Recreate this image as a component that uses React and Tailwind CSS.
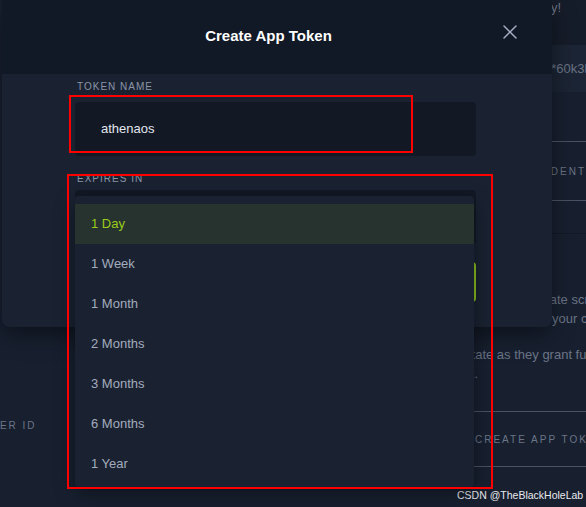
import React from 'react';
import { X } from 'lucide-react';

const options = ['1 Day', '1 Week', '1 Month', '2 Months', '3 Months', '6 Months', '1 Year'];

// Page behind the dialog, mostly covered
const BackgroundPage = () => (
    <div className="flex h-full">
        <div className="w-[300px] shrink-0 pt-[419px]">
            <div className="-ml-[18px] text-[10px] leading-[14px] tracking-[0.2em] text-[#6b7587] whitespace-nowrap">USER ID</div>
        </div>
        <div className="flex-1 min-w-0 flex flex-col text-[#6b7587]">
            <div className="h-[45px] bg-[#161d2a]">
                <div className="w-[261px] text-right text-[13px] leading-4 whitespace-nowrap">Copy it now and enjoy!</div>
            </div>
            <div className="h-[47px] bg-[#1c2535] flex items-center pl-[226px] text-[13px] whitespace-nowrap">******60k3lz7Qa</div>
            <div className="h-[49px]" />
            <div className="h-[60px] border-y border-[#4a5365] flex items-center pl-[246px] text-[10px] tracking-[0.2em] whitespace-nowrap">IDENTITY</div>
            <div className="h-[33px] border-b border-[#131a26]" />
            <div className="mt-[56px] text-[13px] leading-[19px] whitespace-nowrap">
                <div className="pl-[197px]">authenticate scripts and tools</div>
                <div className="pl-[252px]">your code</div>
            </div>
            <div className="mt-[17px] text-[13px] leading-[19px] whitespace-nowrap">
                <div className="pl-[160px]">rotate as they grant full access</div>
                <div className="w-[178px] text-right">your account.</div>
            </div>
            <div className="mt-[28px] h-[56px] border-y border-[#4a5365] flex items-center pl-[175px] text-[10px] tracking-[0.2em] whitespace-nowrap">CREATE APP TOKEN</div>
        </div>
    </div>
);

const ExpiryMenu = () => (
    <div className="absolute left-0 top-[6px] w-[399px] z-10 rounded bg-[#1a2232] pt-2 pb-[3px] shadow-[0_6px_20px_rgba(0,0,0,0.45)]">
        {options.map((opt, i) => (
            <div
                key={opt}
                className={i === 0
                    ? 'h-[40px] flex items-center pl-4 text-[13px] bg-[#27332f] text-[#9acb1c]'
                    : 'h-[40px] flex items-center pl-4 text-[13px] text-[#a3acbd]'}
            >
                {opt}
            </div>
        ))}
    </div>
);

export default function App() {
    return (
        <div className="relative w-[586px] h-[507px] overflow-hidden bg-[#182030] font-['Liberation_Sans',Arial,sans-serif]">
            <BackgroundPage />

            {/* Dialog */}
            <div className="absolute left-[2px] top-0 w-[550px] rounded-b-lg shadow-[0_8px_24px_rgba(0,0,0,0.45)]">
                <div className="relative h-[74px] bg-[#121926] flex items-center justify-center pr-[17px] pb-[2px]">
                    <h2 className="text-[15px] font-bold text-white">Create App Token</h2>
                    <button className="absolute left-[496px] top-[20px] text-[#a3adc0]">
                        <X size={24} strokeWidth={1.5} />
                    </button>
                </div>
                <div className="bg-[#1a2232] pl-[73px] pr-[76px] pt-[7px] pb-[25px] rounded-b-lg">
                    <div className="pl-[2px] text-[10px] leading-[12px] tracking-[0.1em] text-[#8a94a6]">TOKEN NAME</div>
                    <div className="mt-[9px] h-[54px] rounded bg-[#121925] flex items-center pl-[26px] text-[13px] text-[#e2e6ee]">athenaos</div>
                    <div className="pl-[2px] mt-[17px] mb-[5px] text-[10px] leading-[12px] tracking-[0.1em] text-[#8a94a6]">EXPIRES IN</div>
                    <div className="relative">
                        <div className="h-[54px] rounded bg-[#121925]" />
                        <ExpiryMenu />
                    </div>
                    <button className="mt-[18px] w-full h-[40px] rounded bg-[#8dc21f] text-[#121926] text-[12px] font-bold tracking-[0.1em]">CREATE TOKEN</button>
                </div>
            </div>

            {/* Screenshot annotations */}
            <div className="absolute left-[69px] top-[95px] w-[344px] h-[58px] border-2 border-[#ff0000] z-20" />
            <div className="absolute left-[67px] top-[174px] w-[426px] h-[315px] border-2 border-[#ff0000] z-20" />

            <div className="absolute left-[457px] top-[488px] text-[10.5px] leading-[14px] text-[#e8eaee] whitespace-nowrap">CSDN @TheBlackHoleLab</div>
        </div>
    );
}
